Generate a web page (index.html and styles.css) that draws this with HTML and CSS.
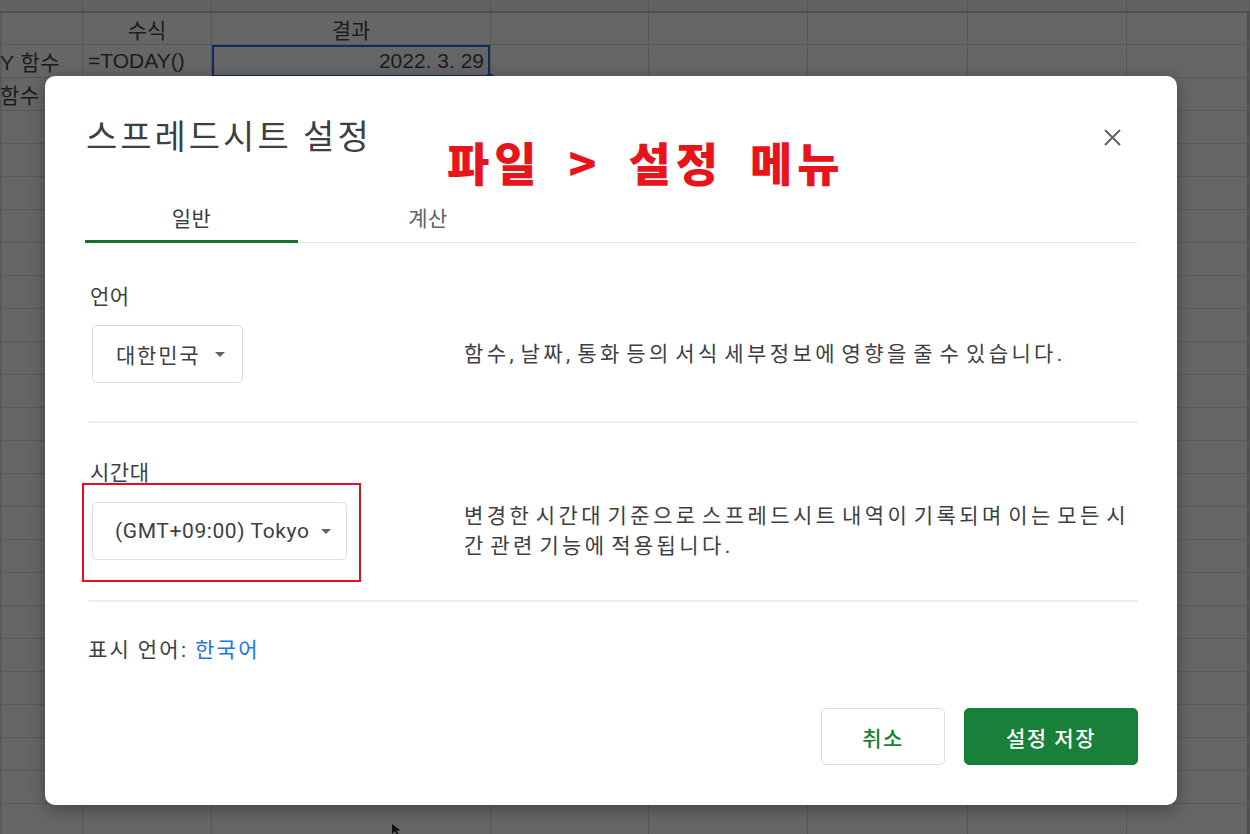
FILE: index.html
```html
<!DOCTYPE html>
<html lang="ko">
<head>
<meta charset="utf-8">
<title>스프레드시트 설정</title>
<link rel="stylesheet" href="styles.css">
</head>
<body>
<div class="sheet">
  <div class="row row-head">
    <div class="cell"></div><div class="cell"></div><div class="cell"></div><div class="cell"></div>
    <div class="cell"></div><div class="cell"></div><div class="cell"></div><div class="cell"></div>
  </div>
  <div class="row row-1">
    <div class="cell"></div>
    <div class="cell center">수식</div>
    <div class="cell center">결과</div>
    <div class="cell"></div><div class="cell"></div><div class="cell"></div><div class="cell"></div><div class="cell"></div>
  </div>
  <div class="row">
    <div class="cell flush">Y 함수</div>
    <div class="cell">=TODAY()</div>
    <div class="cell right selected">2022. 3. 29<span class="handle"></span></div>
    <div class="cell"></div><div class="cell"></div><div class="cell"></div><div class="cell"></div><div class="cell"></div>
  </div>
  <div class="row">
    <div class="cell flush">함수</div>
    <div class="cell"></div><div class="cell"></div><div class="cell"></div><div class="cell"></div>
    <div class="cell"></div><div class="cell"></div><div class="cell"></div>
  </div>
  <div class="row filler">
    <div class="cell"></div><div class="cell"></div><div class="cell"></div><div class="cell"></div>
    <div class="cell"></div><div class="cell"></div><div class="cell"></div><div class="cell"></div>
  </div>
</div>

<svg class="cursor" width="9" height="12" viewBox="0 0 9 12"><path d="M0 0 L0 10 L3 7 L5 11 L6.5 10.3 L4.6 6.5 L8.5 6.5 Z" fill="#111"/></svg>

<div class="dialog">
  <div class="dlg-head">
    <h1 class="dlg-title">스프레드시트 설정</h1>
    <button class="close" aria-label="닫기">
      <svg width="17" height="17" viewBox="0 0 17 17"><path d="M1 1 L16 16 M16 1 L1 16" stroke="#5f6368" stroke-width="2" fill="none"/></svg>
    </button>
  </div>
  <div class="annot">파일 &gt; 설정 메뉴</div>

  <div class="tabs">
    <div class="tab tab-general active">일반</div>
    <div class="tab tab-calc">계산</div>
  </div>

  <div class="section sec-lang">
    <div class="label">언어</div>
    <div class="field-row">
      <div class="field">
        <div class="select select-ko">대한민국<span class="caret"></span></div>
      </div>
      <p class="desc">함수, 날짜, 통화 등의 서식 세부정보에 영향을 줄 수 있습니다.</p>
    </div>
  </div>

  <div class="section sec-tz">
    <div class="label">시간대</div>
    <div class="field-row">
      <div class="field highlight">
        <div class="select select-tz">(GMT+09:00) Tokyo<span class="caret"></span></div>
      </div>
      <p class="desc">변경한 시간대 기준으로 스프레드시트 내역이 기록되며 이는 모든 시간 관련 기능에 적용됩니다.</p>
    </div>
  </div>

  <div class="display-lang">표시 언어: <a class="link" href="#">한국어</a></div>

  <div class="actions">
    <button class="btn btn-cancel">취소</button>
    <button class="btn btn-save">설정 저장</button>
  </div>
</div>
</body>
</html>
```

FILE: styles.css
```css
html, body {
  margin: 0;
  padding: 0;
}

body {
  width: 1250px;
  height: 834px;
  overflow: hidden;
  position: relative;
  background: #666666;
  font-family: Roboto, "Noto Sans CJK KR", sans-serif;
}

/* ---------- background spreadsheet (dimmed) ---------- */
.sheet {
  display: flex;
  flex-direction: column;
  height: 834px;
  box-shadow: inset -3px 0 0 #4f4f4f, inset 2px 0 0 #5a5a5a;
}

.row {
  display: grid;
  grid-template-columns: 83px 129px 279px 158px 159px 160px 159px 1fr;
  height: 33px;
  box-sizing: border-box;
  border-bottom: 1px solid #575757;
  font-family: "Liberation Sans", "Noto Sans CJK KR", sans-serif;
  font-size: 21px;
  color: #1c1c1c;
}

.row-head {
  height: 13px;
  border-bottom: 2px solid #4e4e4e;
  background: #626262;
}

.row-1 {
  height: 32px;
}

.cell {
  border-right: 1px solid #575757;
  display: flex;
  align-items: center;
  padding: 0 5px;
  white-space: nowrap;
  overflow: hidden;
  position: relative;
}

.cell.center { justify-content: center; }
.cell.right { justify-content: flex-end; padding-right: 6px; }
.cell.flush { padding: 0; overflow: visible; letter-spacing: 0.5px; }

.cell.selected {
  overflow: visible;
  box-shadow: inset 0 0 0 2px #0c2d63;
}

.handle {
  position: absolute;
  right: -3px;
  bottom: -3px;
  width: 6px;
  height: 6px;
  background: #0c2d63;
}

.row.filler {
  flex: 1;
  height: auto;
  border-bottom: 0;
  background: repeating-linear-gradient(to bottom, transparent 0 32px, #575757 32px 33px);
}

.cursor {
  position: absolute;
  left: 392px;
  top: 824px;
}

/* ---------- dialog ---------- */
.dialog {
  position: absolute;
  left: 45px;
  top: 76px;
  width: 1132px;
  box-sizing: border-box;
  padding: 0 39px 40px 40px;
  background: #ffffff;
  border-radius: 10px;
  box-shadow: 0 4px 18px rgba(0, 0, 0, 0.35);
  color: #3c4043;
}

.dlg-head {
  display: flex;
  align-items: center;
  justify-content: space-between;
  padding-top: 40px;
  height: 82px;
  box-sizing: border-box;
}

.dlg-title {
  margin: 0 0 0 1px;
  font-size: 34px;
  font-weight: 400;
  line-height: 42px;
  letter-spacing: 3px;
  color: #3c4043;
}

.close {
  width: 40px;
  height: 40px;
  margin-right: 6px;
  padding: 0;
  border: 0;
  background: none;
  display: flex;
  align-items: center;
  justify-content: center;
}

.annot {
  position: absolute;
  left: 402px;
  top: 62px;
  font-family: "Noto Sans CJK KR", sans-serif;
  font-weight: 900;
  font-size: 46px;
  line-height: 46px;
  letter-spacing: 5px;
  word-spacing: 9px;
  color: #e8141c;
}

/* tabs */
.tabs {
  display: flex;
  margin-top: 32px;
  height: 53px;
  box-shadow: inset 0 -1px 0 #e3e5e8;
}

.tab {
  box-sizing: border-box;
  display: flex;
  align-items: center;
  justify-content: center;
  padding-top: 4px;
  font-size: 21px;
  letter-spacing: 0.5px;
  color: #5f6368;
  border-bottom: 3px solid transparent;
}

.tab-general { width: 213px; }
.tab-calc { width: 260px; }

.tab.active {
  color: #3c4043;
  border-bottom-color: #137333;
}

/* sections */
.section {
  margin-left: 3px;
  border-bottom: 2px solid #eceef1;
}

.sec-lang { padding-bottom: 38px; }
.sec-tz { padding-bottom: 39px; }

.label {
  font-size: 21px;
  line-height: 28px;
  letter-spacing: 0.5px;
  color: #3c4043;
  padding-left: 2px;
}

.sec-lang .label { margin-top: 40px; }
.sec-tz .label { margin-top: 36px; }

.field-row {
  display: grid;
  grid-template-columns: 376px 1fr;
  align-items: center;
  margin-top: 14px;
}

.field {
  justify-self: start;
  margin-left: 4px;
  position: relative;
}

.field.highlight::after {
  content: "";
  position: absolute;
  left: -10px;
  top: -19px;
  right: -14px;
  bottom: -22px;
  border: 2px solid #e5101e;
}

.select {
  display: inline-flex;
  align-items: center;
  gap: 15px;
  height: 58px;
  box-sizing: border-box;
  padding: 0 17px 0 23px;
  border: 1px solid #dadce0;
  border-radius: 5px;
  font-size: 21px;
  color: #3c4043;
  white-space: nowrap;
}

.select-ko { letter-spacing: 1.8px; }
.select-tz {
  letter-spacing: 0.6px;
  gap: 12px;
  padding: 0 15px 0 22px;
}

.caret {
  width: 0;
  height: 0;
  border-left: 5px solid transparent;
  border-right: 5px solid transparent;
  border-top: 5px solid #5f6368;
}

.desc {
  margin: 0;
  font-size: 21px;
  line-height: 30px;
  letter-spacing: 3.4px;
  word-spacing: -5px;
  color: #3c4043;
}

.display-lang {
  margin: 34px 0 0 3px;
  font-size: 21px;
  line-height: 28px;
  letter-spacing: 2.3px;
  word-spacing: -1px;
  color: #3c4043;
}

.link {
  color: #1a73e8;
  text-decoration: none;
}

.actions {
  display: flex;
  justify-content: flex-end;
  gap: 19px;
  margin-top: 44px;
}

.btn {
  height: 57px;
  box-sizing: border-box;
  border-radius: 5px;
  font-family: Roboto, "Noto Sans CJK KR", sans-serif;
  font-size: 21px;
  font-weight: 500;
  letter-spacing: 1.5px;
  padding: 0;
}

.btn-cancel {
  width: 124px;
  background: #ffffff;
  border: 1px solid #dadce0;
  color: #188038;
}

.btn-save {
  width: 174px;
  background: #188038;
  border: 1px solid #188038;
  color: #ffffff;
}
```
